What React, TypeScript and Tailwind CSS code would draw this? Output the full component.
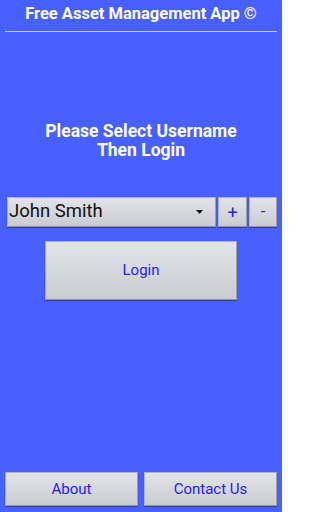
import { ReactNode } from 'react';

const FACE =
  'border border-[#b4b6bf] border-b-[#8e909a] border-r-[#9fa1aa] bg-gradient-to-b from-[#e3e4e9] to-[#cbccd3] shadow-[0_1px_1px_rgba(0,0,0,0.3)]';

const Btn = ({ className, children }: { className: string; children: ReactNode }) => (
  <button type="button" className={`${FACE} flex items-center justify-center text-[#2222f4] ${className}`}>
    {children}
  </button>
);

export default function App() {
  return (
    <div className="flex h-[512px] w-[282px] flex-col overflow-hidden bg-[#4760ff] font-['Roboto',sans-serif]">
      {/* Header */}
      <div className="mx-[5px] border-b border-[#c3cbff] pt-[3px] pb-[6px] text-center text-[16.5px] font-bold leading-[22px] text-white">
        Free Asset Management App ©
      </div>

      {/* Prompt */}
      <div className="mt-[90px] text-center text-[17.5px] font-bold leading-[19px] text-white">
        Please Select Username
        <br />
        Then Login
      </div>

      {/* User select row */}
      <div className="mt-[37px] flex h-[30px] gap-[2px] pl-[7px] pr-[5px]">
        <div className={`${FACE} flex w-[209px] items-center justify-between pl-[1px] pr-[12px] text-[18.5px] text-[#111]`}>
          <span>John Smith</span>
          <svg width="7" height="4" viewBox="0 0 7 4">
            <path d="M0 0H7L3.5 4Z" fill="#111" />
          </svg>
        </div>
        <Btn className="w-[29px] text-[18px]">+</Btn>
        <Btn className="w-[28px] text-[17px]">-</Btn>
      </div>

      {/* Login */}
      <div className="mt-[14px] flex justify-center">
        <Btn className="h-[59px] w-[192px] text-[15px]">Login</Btn>
      </div>

      <div className="flex-1" />

      {/* Footer */}
      <div className="mb-[6px] flex h-[34px] gap-[6px] px-[5px]">
        <Btn className="flex-1 text-[15px]">About</Btn>
        <Btn className="flex-1 text-[15px]">Contact Us</Btn>
      </div>
    </div>
  );
}
